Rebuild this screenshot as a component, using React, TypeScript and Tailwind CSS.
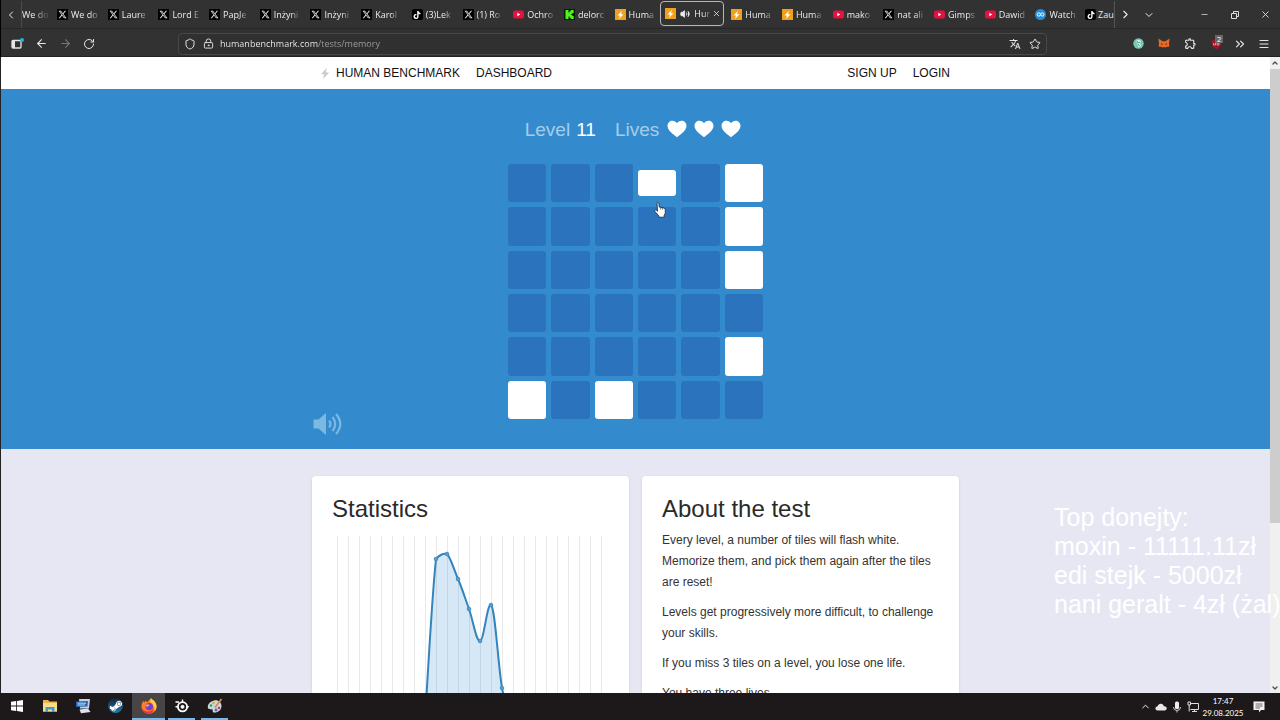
import type { ReactNode } from "react";
import {
  ArrowLeft,
  ArrowRight,
  ChevronDown,
  ChevronLeft,
  ChevronRight,
  ChevronUp,
  ChevronsRight,
  LockKeyhole,
  Menu,
  Minus,
  RotateCw,
  Shield,
  Star,
  Volume2,
  X,
} from "lucide-react";
import { FaSteamSymbol, FaTiktok, FaXTwitter } from "react-icons/fa6";
import { MdOutlineExtension, MdTranslate } from "react-icons/md";

type Site = "x" | "tiktok" | "youtube" | "kick" | "benchmark" | "watch";

const TABS_BEFORE: { site: Site; title: string }[] = [
  { site: "x", title: "We do" },
  { site: "x", title: "Laure" },
  { site: "x", title: "Lord E" },
  { site: "x", title: "PapJe" },
  { site: "x", title: "Inżyni" },
  { site: "x", title: "Inżyni" },
  { site: "x", title: "Karol" },
  { site: "tiktok", title: "(3)Lek" },
  { site: "x", title: "(1) Ro" },
  { site: "youtube", title: "Ochro" },
  { site: "kick", title: "delorc" },
  { site: "benchmark", title: "Huma" },
];

const TABS_AFTER: { site: Site; title: string }[] = [
  { site: "benchmark", title: "Huma" },
  { site: "benchmark", title: "Huma" },
  { site: "youtube", title: "mako" },
  { site: "x", title: "nat ali" },
  { site: "youtube", title: "Gimps" },
  { site: "youtube", title: "Dawid" },
  { site: "watch", title: "Watch" },
];

// "#" lit, "~" lit and mid-flip, "." idle
const BOARD = ["...~.#", ".....#", ".....#", "......", ".....#", "#.#..."];

const GRID_LINES = Array.from({ length: 25 }, (_, i) => 5 + i * 11);

const POINTS = [
  [104, 23],
  [115, 18],
  [126, 43],
  [137, 73],
  [148, 105],
  [159, 69],
  [170, 152],
];

const CURVE =
  "M93 184 C97 120 100 60 104 23 C106 20 111 17 115 18 C119 22 122 34 126 43 C130 52 133 62 137 73 C141 84 144 105 148 105 C152 105 155 67 159 69 C163 71 166 128 170 152 C173 168 177 178 181 184";

const ABOUT = [
  "Every level, a number of tiles will flash white. Memorize them, and pick them again after the tiles are reset!",
  "Levels get progressively more difficult, to challenge your skills.",
  "If you miss 3 tiles on a level, you lose one life.",
  "You have three lives.",
];

function Bolt({ className }: { className: string }) {
  return (
    <svg viewBox="0 0 10 12" className={className} fill="currentColor">
      <path d="M7 0 L0.5 6.8 H4.2 L2.8 12 L9.5 4.9 H5.8 Z" />
    </svg>
  );
}

function Favicon({ site }: { site: Site }) {
  if (site === "x")
    return (
      <span className="flex size-[11px] shrink-0 items-center justify-center bg-black text-gray-200">
        <FaXTwitter size={9} />
      </span>
    );
  if (site === "tiktok")
    return (
      <span className="flex size-[11px] shrink-0 items-center justify-center rounded-xs bg-black text-white">
        <FaTiktok size={8} />
      </span>
    );
  if (site === "youtube")
    return (
      <svg viewBox="0 0 11 11" className="size-[11px] shrink-0">
        <rect y="1.6" width="11" height="7.8" rx="2" fill="#e8103f" />
        <path d="M4.3 3.7 L7.3 5.5 L4.3 7.3 Z" fill="#fff" />
      </svg>
    );
  if (site === "kick")
    return (
      <svg viewBox="0 0 11 11" className="size-[11px] shrink-0">
        <rect width="11" height="11" fill="#071a04" />
        <path d="M1.5 1 H4.5 V3.5 H5.5 V2.2 H6.7 V1 H9.7 V4 H8.4 V5 H7.2 V6 H8.4 V7 H9.7 V10 H6.7 V8.8 H5.5 V7.5 H4.5 V10 H1.5 Z" fill="#4df51b" />
      </svg>
    );
  if (site === "watch")
    return (
      <svg viewBox="0 0 11 11" className="size-[11px] shrink-0">
        <circle cx="5.5" cy="5.5" r="5.5" fill="#238fdc" />
        <circle cx="3.8" cy="5.5" r="1.6" fill="none" stroke="#fff" strokeWidth="1" />
        <circle cx="7.3" cy="5.5" r="1.6" fill="none" stroke="#fff" strokeWidth="1" />
      </svg>
    );
  return (
    <span className="flex size-[11px] shrink-0 items-center justify-center bg-[#f0a01c] text-white">
      <Bolt className="h-2 w-[7px]" />
    </span>
  );
}

function Tab({ site, title }: { site: Site; title: string }) {
  return (
    <button className="flex min-w-0 flex-1 items-center gap-[3px] pl-[5px]">
      <Favicon site={site} />
      <span className="text-left whitespace-nowrap [mask-image:linear-gradient(to_right,black_70%,#0004)]">
        {title}
      </span>
    </button>
  );
}

function TabBar() {
  return (
    <div className="flex h-[29px] items-stretch border-b border-[#262626] pt-px text-[9px] text-[#ededed]">
      <button aria-label="Scroll tabs left" className="flex w-[21px] items-center justify-center border-r border-[#4a4a4a]">
        <ChevronLeft size={12} />
      </button>
      <button className="w-[30px] text-left whitespace-nowrap [mask-image:linear-gradient(to_right,black_40%,#0003_80%)]">
        We do
      </button>
      {TABS_BEFORE.map((tab, i) => (
        <Tab key={i} {...tab} />
      ))}
      <div className="mr-[2px] mb-[2px] flex w-16 shrink-0 items-center gap-1 rounded-sm border border-[#b8b8b8] pl-1">
        <Favicon site="benchmark" />
        <button aria-label="Mute tab" className="flex w-[10px] justify-center">
          <Volume2 size={10} fill="currentColor" />
        </button>
        <span className="whitespace-nowrap [mask-image:linear-gradient(to_right,black_60%,#0003)]">Hur</span>
        <button aria-label="Close tab" className="-ml-[2px]">
          <X size={9} />
        </button>
      </div>
      {TABS_AFTER.map((tab, i) => (
        <Tab key={i} {...tab} />
      ))}
      <button className="flex w-[34px] items-center gap-[2px] border-r border-[#555] pl-1">
        <Favicon site="tiktok" />
        <span className="whitespace-nowrap">Zau</span>
      </button>
      <button aria-label="Scroll tabs right" className="flex w-5 items-center justify-center">
        <ChevronRight size={13} />
      </button>
      <button aria-label="List all tabs" className="flex w-7 items-center justify-center">
        <ChevronDown size={12} />
      </button>
      <div className="flex w-[117px] items-center justify-end text-[#dcdcdc]">
        <button aria-label="Minimize" className="flex w-[30px] justify-center">
          <Minus size={9} />
        </button>
        <button aria-label="Restore" className="flex w-[31px] justify-center">
          <svg viewBox="0 0 8 8" className="size-2" fill="none" stroke="currentColor">
            <path d="M0.5 2.5 H5.5 V7.5 H0.5 Z M2.5 2 V0.5 H7.5 V5.5 H6" />
          </svg>
        </button>
        <button aria-label="Close" className="flex w-[30px] justify-center">
          <X size={11} />
        </button>
      </div>
    </div>
  );
}

function ToolButton({ label, children }: { label: string; children: ReactNode }) {
  return (
    <button aria-label={label} className="flex w-6 items-center justify-center">
      {children}
    </button>
  );
}

function Toolbar() {
  return (
    <div className="flex h-7 items-center border-b border-[#222] px-1 pt-[2px] text-[#e6e6e6]">
      <ToolButton label="Sidebar">
        <svg viewBox="0 0 13 12" className="h-3 w-[13px]">
          <rect x="1" y="2.5" width="9" height="7.5" rx="1" fill="none" stroke="currentColor" strokeWidth="1.3" />
          <path d="M1 2.5 H4 V10 H1 Z" fill="currentColor" />
          <circle cx="11" cy="2" r="2" fill="#22b8cf" />
        </svg>
      </ToolButton>
      <ToolButton label="Back">
        <ArrowLeft size={13} />
      </ToolButton>
      <div className="flex text-[#777]">
        <ToolButton label="Forward">
          <ArrowRight size={13} />
        </ToolButton>
      </div>
      <ToolButton label="Reload">
        <RotateCw size={12} />
      </ToolButton>
      <div className="mr-auto ml-[77px] flex h-[22px] max-w-[869px] flex-1 items-center rounded-sm border border-[#484848] bg-[#303030] px-[5px]">
        <Shield size={12} className="shrink-0" />
        <LockKeyhole size={11} className="ml-[7px] shrink-0" />
        <input
          aria-label="Address"
          defaultValue="humanbenchmark.com/tests/memory"
          className="ml-[6px] min-w-0 flex-1 bg-linear-to-r from-[#f4f4f4] from-[98px] to-[#a0a0a0] to-[98px] bg-clip-text text-[9px] text-transparent outline-none"
        />
        <button aria-label="Translate" className="mr-2">
          <MdTranslate size={12} />
        </button>
        <button aria-label="Bookmark">
          <Star size={12} />
        </button>
      </div>
      <div className="flex items-center gap-[2px]">
        <ToolButton label="Extension">
          <svg viewBox="0 0 11 11" className="size-[11px]">
            <circle cx="5.5" cy="5.5" r="5.2" fill="#79c6b3" />
            <path d="M3 3 Q5.5 1 8 3 L7 5 L8 7.5 L5.5 9.5 L4.5 6 Z" fill="#d5f3e8" />
            <path d="M4 3 L5 5 L7 4 M5 6 L6.5 8" fill="none" stroke="#31806f" strokeWidth="0.8" />
          </svg>
        </ToolButton>
        <ToolButton label="Wallet">
          <svg viewBox="0 0 12 11" className="h-[11px] w-3">
            <path d="M0.5 0.5 L4.5 3.3 H7.5 L11.5 0.5 L11 6 L11.5 8.5 L8 9 L6.8 10 H5.2 L4 9 L0.5 8.5 L1 6 Z" fill="#e66a25" />
            <path d="M3 5 L5 6.3 L3.6 7 Z M9 5 L7 6.3 L8.4 7 Z M5 9 H7 L6.6 10 H5.4 Z" fill="#5a2415" />
          </svg>
        </ToolButton>
        <ToolButton label="Extensions">
          <MdOutlineExtension size={13} />
        </ToolButton>
        <button aria-label="Blocker" className="relative flex w-6 items-center justify-center">
          <svg viewBox="0 0 11 12" className="h-3 w-[11px]">
            <path d="M5.5 0.5 Q8 2 10.5 2 Q11 9 5.5 11.5 Q0 9 0.5 2 Q3 2 5.5 0.5 Z" fill="#a01424" />
            <path d="M2.5 5 V7 H4.5 V5 M6 7 V5 H8 V7 Z" fill="none" stroke="#e9c4c7" strokeWidth="0.7" />
          </svg>
          <span className="absolute -top-[3px] right-[5px] flex h-2 w-2 items-center justify-center bg-[#666] text-[8px] leading-none text-white">
            2
          </span>
        </button>
      </div>
      <div className="flex items-center">
        <ToolButton label="More tools">
          <ChevronsRight size={14} />
        </ToolButton>
        <ToolButton label="Menu">
          <Menu size={12} />
        </ToolButton>
      </div>
    </div>
  );
}

function SiteNav() {
  return (
    <nav className="bg-white text-xs text-[#111]">
      <div className="mx-auto flex h-8 max-w-[647px] items-center pr-[9px] pl-2">
        <a href="#home" className="flex items-center gap-[6px]">
          <Bolt className="h-[11px] w-[10px] text-[#c9c9c9]" />
          HUMAN BENCHMARK
        </a>
        <a href="#dashboard" className="ml-4">
          DASHBOARD
        </a>
        <a href="#signup" className="mr-4 ml-auto">
          SIGN UP
        </a>
        <a href="#login">LOGIN</a>
      </div>
    </nav>
  );
}

function Heart() {
  return (
    <svg viewBox="0 0 20 18" className="h-[18px] w-5" fill="#fff">
      <path d="M10 17.2 C6 14.2 0.5 10.5 0.5 5.8 C0.5 2.8 2.8 0.7 5.4 0.7 C7.4 0.7 9.1 1.7 10 3.2 C10.9 1.7 12.6 0.7 14.6 0.7 C17.2 0.7 19.5 2.8 19.5 5.8 C19.5 10.5 14 14.2 10 17.2 Z" />
    </svg>
  );
}

function HandCursor() {
  return (
    <svg viewBox="0 0 12 16" className="absolute top-[38px] left-[146px] h-4 w-3">
      <path
        d="M3 1.4 Q3 0.5 3.9 0.5 Q4.8 0.5 4.9 1.4 L5.2 5 L9.8 5.9 Q11.3 6.2 11.3 7.8 V10.5 Q11.3 12 10.2 13.2 V15.2 H4.8 V13.8 L1 9.6 Q0.3 8.6 1.1 8 Q1.8 7.6 2.5 8.3 L3.5 9.2 Z"
        fill="#fff"
        stroke="#26303c"
        strokeWidth="0.9"
      />
      <path d="M6.7 5.4 V7.5 M8.6 5.7 V7.5" stroke="#26303c" strokeWidth="0.7" />
    </svg>
  );
}

function Game() {
  return (
    <section className="bg-[#338bce] pt-6 pb-[30px]">
      <div className="relative mx-auto max-w-[647px]">
        <div className="flex h-[34px] items-center justify-center text-[19px] text-white">
          <span className="text-[#a5cdea]">Level</span>
          <span className="ml-[6px]">11</span>
          <span className="mr-2 ml-[19px] text-[#a5cdea]">Lives</span>
          <span className="flex gap-[7px] pr-[5px] pb-[2px]">
            <Heart />
            <Heart />
            <Heart />
          </span>
        </div>
        <div className="relative mx-auto mt-[17px] grid h-[255px] w-[255px] grid-cols-6 grid-rows-6 gap-[5px]">
          {BOARD.flatMap((row, r) =>
            row.split("").map((cell, c) => (
              <button key={`${r}-${c}`} aria-label={`Tile ${r + 1}, ${c + 1}`} className="flex items-center">
                <span
                  className={[
                    "w-full rounded-[3px]",
                    cell === "~" ? "h-[26px]" : "h-full",
                    cell === "." ? "bg-[#2b74bd]" : "bg-white",
                  ].join(" ")}
                />
              </button>
            )),
          )}
          <HandCursor />
        </div>
        <button aria-label="Sound" className="absolute -bottom-[17px] left-0 text-[#7db8e2]">
          <svg viewBox="0 0 32 24" className="h-6 w-8">
            <path d="M1.5 7.5 H6.5 L14 1 V23 L6.5 16.5 H1.5 Z" fill="currentColor" />
            <path
              d="M17 8.5 Q20 12 17 15.5 M20.5 5 Q26 12 20.5 19 M24 2 Q32.5 12 24 22"
              fill="none"
              stroke="currentColor"
              strokeWidth="2.2"
            />
          </svg>
        </button>
      </div>
    </section>
  );
}

function Card({ title, children }: { title: string; children: ReactNode }) {
  return (
    <section className="min-w-0 flex-1 rounded-sm bg-white px-5 pt-[17px] pb-5 shadow-sm">
      <h2 className="text-2xl text-[#2a2a2a]">{title}</h2>
      {children}
    </section>
  );
}

function StatsChart() {
  return (
    <svg viewBox="0 0 277 184" className="mt-[11px] w-full">
      {GRID_LINES.map((x) => (
        <path key={x} d={`M${x}.5 0 V184`} stroke="#e9e9e9" />
      ))}
      <path d={`${CURVE} Z`} fill="#338bce" fillOpacity="0.2" />
      <path d={CURVE} fill="none" stroke="#3484bd" strokeWidth="2" />
      {POINTS.map(([x, y]) => (
        <circle key={x} cx={x} cy={y} r="1.8" fill="#5a9fd0" stroke="#3f8dc6" />
      ))}
    </svg>
  );
}

function Scrollbar() {
  return (
    <div className="flex w-[10px] shrink-0 flex-col items-center bg-[#f0f0f0] text-[#505050]">
      <div className="flex h-3 items-center">
        <ChevronUp size={8} strokeWidth={4} />
      </div>
      <div className="h-[454px] w-full bg-[#cdcdcd]" />
      <div className="mt-auto flex h-[10px] items-center">
        <ChevronDown size={8} strokeWidth={4} />
      </div>
    </div>
  );
}

function TaskButton({ label, open, active, children }: { label: string; open?: boolean; active?: boolean; children: ReactNode }) {
  return (
    <button
      aria-label={label}
      className={[
        "flex items-center justify-center border-b-2",
        open && !active ? "mx-[3px] w-[27px]" : "w-[33px]",
        active ? "bg-[#484546]" : "",
        open ? "border-[#76b9ed]" : "border-transparent",
      ].join(" ")}
    >
      {children}
    </button>
  );
}

function Taskbar() {
  return (
    <footer className="flex h-[27px] shrink-0 items-stretch bg-[#1d191a] text-white">
      <TaskButton label="Start">
        <svg viewBox="0 0 12 12" className="size-3" fill="#fff">
          <path d="M0 1.7 L5.2 1 V5.6 H0 Z M6 0.9 L12 0 V5.6 H6 Z M0 6.4 H5.2 V11 L0 10.3 Z M6 6.4 H12 V12 L6 11.1 Z" />
        </svg>
      </TaskButton>
      <TaskButton label="File Explorer">
        <svg viewBox="0 0 16 14" className="h-[14px] w-4">
          <path d="M1 1 H6 L7.5 2.5 H15 V12.5 H1 Z" fill="#e9b44a" />
          <path d="M1 4 H15 V12.5 H1 Z" fill="#f9dc84" />
          <path d="M3.5 13 V8 H12.5 V13 H10 V10.5 H6 V13 Z" fill="#3c9bd2" />
        </svg>
      </TaskButton>
      <TaskButton label="Remote Desktop">
        <svg viewBox="0 0 16 16" className="size-4">
          <path d="M4 1 L15 1 L14 10.5 L5 10.5 Z" fill="#c3cfe2" />
          <path d="M1 3.5 L13 3 L12.5 8.5 L1 9 Z" fill="#2767b5" />
          <path d="M2.5 5.2 H11 M2.5 7 H10" stroke="#c2dcf6" />
          <path d="M4.5 11.5 L13 10.5 L15.5 14 L6 15.2 Z" fill="#dfe3ee" />
        </svg>
      </TaskButton>
      <TaskButton label="Steam">
        <span className="flex size-[15px] items-center justify-center rounded-full bg-linear-to-b from-[#15233c] to-[#1a7fa8]">
          <FaSteamSymbol size={14} />
        </span>
      </TaskButton>
      <TaskButton label="Firefox" open active>
        <svg viewBox="0 0 16 16" className="size-4">
          <path d="M8 2 C10 1.5 9 0.5 10 0.3 C11 2 15 3 15.5 8 C15.7 12.5 12 15.7 8 15.7 C3.7 15.7 0.5 12.5 0.5 8.5 C0.5 6 1.5 3.8 2.3 2.8 L3 4.5 L5 2.5 L6 4.5 Z" fill="#ff7b24" />
          <path d="M10 0.3 C11 2 15 3 15.5 8 C15.6 10 14.8 12 13.5 13.3 C14 8 11.5 6 9.5 4.5 C9 3 9.3 1.5 10 0.3 Z" fill="#ffd13e" />
          <path d="M0.5 8.5 C1 12 4 13.5 7 13.5 C10 13.5 12 12 12.5 10 C13 13 10.5 15.7 8 15.7 C3.7 15.7 0.5 12.5 0.5 8.5 Z" fill="#ec2f56" />
          <circle cx="8.3" cy="8.6" r="3.7" fill="#7a3bd0" />
          <path d="M4.5 7 Q7 5.5 8.7 7.2 Q7.3 7.6 6.6 9 Q5.2 9 4.5 7 Z" fill="#ffa436" />
        </svg>
      </TaskButton>
      <TaskButton label="SteelSeries" open>
        <svg viewBox="0 0 14 14" className="size-[14px]" fill="none" stroke="#fff">
          <circle cx="7.5" cy="7.8" r="4.6" strokeWidth="1.8" />
          <circle cx="7.5" cy="7.8" r="1.5" fill="#fff" />
          <path d="M0.5 3 H4 M7.5 3.5 V0.5 M0.5 7.8 H3 M12 7.8 H13.8" strokeWidth="1.4" />
        </svg>
      </TaskButton>
      <TaskButton label="Paint" open>
        <svg viewBox="0 0 16 16" className="size-4">
          <path d="M7 2.5 C11 1.5 14.5 4 14.5 8 C14.5 12.5 10.5 15 6.5 14.5 C5 14 6.5 12 5 11.3 C3.5 10.8 1 12 0.8 9 C0.8 6 3.5 3.3 7 2.5 Z" fill="#c9d7e4" />
          <circle cx="4" cy="7.5" r="1.3" fill="#3d9b4b" />
          <circle cx="6.5" cy="5" r="1.3" fill="#e2aa2f" />
          <circle cx="9" cy="12" r="1.4" fill="#5268c4" />
          <circle cx="12" cy="10" r="1.3" fill="#cc3f3f" />
          <path d="M8 9.5 L14.5 1" stroke="#d88b3e" strokeWidth="1.8" />
        </svg>
      </TaskButton>
      <div className="ml-auto flex items-center">
        <button aria-label="Hidden icons" className="flex w-4 justify-center">
          <ChevronUp size={11} />
        </button>
        <svg viewBox="0 0 12 8" className="mx-[2px] h-2 w-3" fill="#e8e8e8">
          <path d="M3 7.5 C0.8 7.5 0.3 6 0.5 5 C0.8 3.9 1.8 3.5 2.5 3.5 C3 1.5 4.5 0.7 6 0.8 C7.6 0.9 8.5 1.9 8.9 3.2 C10.7 3.2 11.8 4.1 11.7 5.5 C11.6 6.8 10.7 7.5 9.5 7.5 Z" />
        </svg>
        <svg viewBox="0 0 12 12" className="mx-[2px] size-3">
          <rect x="4" y="0.5" width="4" height="7.5" rx="1.5" fill="#eee" />
          <path d="M2.5 6 Q2.5 9.5 6 9.5 Q9.5 9.5 9.5 6 M6 9.5 V11.5" fill="none" stroke="#ccc" />
        </svg>
        <svg viewBox="0 0 12 12" className="mx-[2px] size-3" fill="none" stroke="#ddd">
          <path d="M3 2.5 H11.5 V8.5 H3.5 M7.5 8.5 V10.5 M5 10.5 H10 M1 1 H3.5 V4 H1 Z M2.2 4 V10.5" />
        </svg>
        <div className="w-11 text-center font-[Lato,sans-serif] text-[8px] leading-3">
          <div>17:47</div>
          <div>29.08.2025</div>
        </div>
        <button aria-label="Notifications" className="flex w-[27px] justify-center">
          <svg viewBox="0 0 12 12" className="size-3">
            <path d="M0.5 0.5 H11.5 V9 H8 L6 11.5 V9 H0.5 Z" fill="#f2f2f2" />
            <path d="M2.5 3 H9.5 M2.5 5 H9.5 M2.5 7 H7" stroke="#444" strokeWidth="0.8" />
          </svg>
        </button>
        <div className="w-2" />
      </div>
    </footer>
  );
}

export default function App() {
  return (
    <div className="flex h-screen flex-col overflow-hidden bg-[#323232] font-['Open_Sans',sans-serif]">
      <header className="shrink-0 border-l border-black bg-[#323232]">
        <TabBar />
        <Toolbar />
      </header>
      <main className="relative flex min-h-0 flex-1 border-l border-[#222] font-['Liberation_Sans',Arial,sans-serif]">
        <div className="min-w-0 flex-1 overflow-hidden bg-[#e7e7f4]">
          <SiteNav />
          <Game />
          <div className="mx-auto flex max-w-[647px] gap-[13px] pt-[27px]">
            <Card title="Statistics">
              <StatsChart />
            </Card>
            <Card title="About the test">
              <div className="mt-[5px] space-y-[9px] text-xs leading-[21px] text-[#333]">
                {ABOUT.map((text) => (
                  <p key={text}>{text}</p>
                ))}
              </div>
            </Card>
          </div>
        </div>
        <Scrollbar />
        {/* stream overlay */}
        <div className="absolute right-0 bottom-[74px] w-[226px] text-[25px] leading-[29px] whitespace-nowrap text-white">
          <p>Top donejty:</p>
          <p>moxin - 11111.11zł</p>
          <p>edi stejk - 5000zł</p>
          <p>nani geralt - 4zł (żal)</p>
        </div>
      </main>
      <Taskbar />
    </div>
  );
}
